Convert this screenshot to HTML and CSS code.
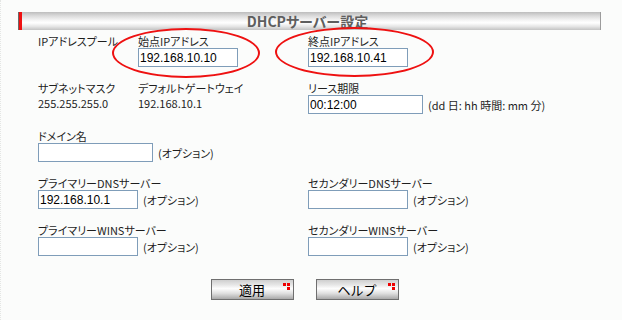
FILE: index.html
```html
<!DOCTYPE html>
<html lang="ja">
<head>
<meta charset="utf-8">
<title>DHCPサーバー設定</title>
<link rel="stylesheet" href="styles.css">
</head>
<body>
<div class="page">
  <div class="titlebar"><span class="title">DHCPサーバー設定</span></div>
  <div class="form">
    <div class="field c1"><div class="label">IPアドレスプール</div></div>
    <div class="field c2"><div class="label">始点IPアドレス</div><input class="box w100" type="text" value="192.168.10.10"></div>
    <div class="field c3"><div class="label">終点IPアドレス</div><input class="box w100" type="text" value="192.168.10.41"></div>

    <div class="field c1"><div class="label">サブネットマスク</div><div class="value">255.255.255.0</div></div>
    <div class="field c2"><div class="label">デフォルトゲートウェイ</div><div class="value">192.168.10.1</div></div>
    <div class="field c3"><div class="label">リース期限</div><div class="line"><input class="box w115" type="text" value="00:12:00"><span class="note">(dd 日: hh 時間: mm 分)</span></div></div>

    <div class="field wide gap2"><div class="label">ドメイン名</div><div class="line"><input class="box w115" type="text" value=""><span class="note">(オプション)</span></div></div>

    <div class="field c12"><div class="label">プライマリーDNSサーバー</div><div class="line"><input class="box w100" type="text" value="192.168.10.1"><span class="note">(オプション)</span></div></div>
    <div class="field c3"><div class="label">セカンダリーDNSサーバー</div><div class="line"><input class="box w100" type="text" value=""><span class="note">(オプション)</span></div></div>

    <div class="field c12"><div class="label">プライマリーWINSサーバー</div><div class="line"><input class="box w100" type="text" value=""><span class="note">(オプション)</span></div></div>
    <div class="field c3"><div class="label">セカンダリーWINSサーバー</div><div class="line"><input class="box w100" type="text" value=""><span class="note">(オプション)</span></div></div>
  </div>
  <div class="buttons">
    <button class="btn" type="button">適用<span class="dots"><i class="d1"></i><i class="d2"></i><i class="d3"></i></span></button>
    <button class="btn" type="button">ヘルプ<span class="dots"><i class="d1"></i><i class="d2"></i><i class="d3"></i></span></button>
  </div>
  <div class="ring ring1"></div>
  <div class="ring ring2"></div>
</div>
</body>
</html>
```
FILE: styles.css
```css
html, body {
  margin: 0;
  padding: 0;
  background: #fbfcfb;
}
body {
  font-family: "Noto Sans CJK JP", "Noto Sans", sans-serif;
  font-size: 11px;
  color: #1e1e1e;
  font-feature-settings: "palt";
  border-left: 1px dotted #e4e6e4;
  height: 320px;
  box-sizing: border-box;
}
.page {
  position: relative;
  padding: 12px 0 0 17px;
  width: 583px;
}
.titlebar {
  height: 18px;
  box-sizing: border-box;
  border-left: 1px solid #6a6a6a;
  border-right: 1px solid #9c9c9c;
  box-shadow: inset 3px 0 0 #ee1111;
  background: linear-gradient(to bottom, #bdbdbd 0%, #d9d9d9 20%, #f4f4f4 45%, #ffffff 60%, #e6e6e6 80%, #c3c3c3 100%);
  display: flex;
  justify-content: center;
  align-items: center;
}
.title {
  font-size: 14px;
  font-weight: bold;
  color: #5e5e5e;
  line-height: 18px;
  padding-right: 4px;
}
.form {
  display: grid;
  grid-template-columns: 100px 170px 1fr;
  row-gap: 14px;
  padding-left: 20px;
  margin-top: 4px;
}
.field { display: flex; flex-direction: column; }
.c1 { grid-column: 1; }
.c2 { grid-column: 2; }
.c3 { grid-column: 3; }
.c12 { grid-column: 1 / span 2; }
.wide { grid-column: 1 / span 3; }
.gap2 { margin-top: 1px; }
.label {
  line-height: 14px;
  height: 14px;
  white-space: nowrap;
}
.value {
  line-height: 14px;
  height: 19px;
  padding-top: 1px;
  box-sizing: border-box;
}
.line {
  display: flex;
  align-items: center;
}
.box {
  box-sizing: border-box;
  height: 19px;
  border: 1px solid #7f9db9;
  background: #ffffff;
  padding: 0 1px;
  margin: 0;
  font-family: "Liberation Sans", Arial, sans-serif;
  font-size: 12px;
  color: #000;
  outline: none;
}
.w100 { width: 100px; }
.w115 { width: 115px; }
.note {
  margin-left: 5px;
  white-space: nowrap;
}
.buttons {
  display: flex;
  justify-content: center;
  gap: 22px;
  margin-top: 23px;
  padding-right: 10px;
}
.btn {
  position: relative;
  width: 83px;
  height: 21px;
  box-sizing: border-box;
  border: 1px solid #6f6f6f;
  background: linear-gradient(to bottom, #cfcfcf 0%, #e6e6e6 25%, #fdfdfd 45%, #e0e0e0 70%, #a9a9a9 100%);
  font-family: "Noto Sans CJK JP", sans-serif;
  font-size: 13px;
  line-height: 18px;
  color: #000;
  padding: 0;
  margin: 0;
}
.dots {
  position: absolute;
  top: 3px;
  right: 3px;
  width: 7px;
  height: 7px;
}
.dots i {
  position: absolute;
  width: 3px;
  height: 3px;
  background: #ee0000;
}
.d1 { left: 0; top: 0; }
.d2 { left: 4px; top: 0; }
.d3 { left: 4px; top: 4px; }
.ring {
  position: absolute;
  border: 2px solid #ee1111;
  border-radius: 50%;
  box-sizing: border-box;
}
.ring1 { left: 111px; top: 28px; width: 148px; height: 50px; }
.ring2 { left: 274px; top: 27px; width: 159px; height: 50px; }
```
